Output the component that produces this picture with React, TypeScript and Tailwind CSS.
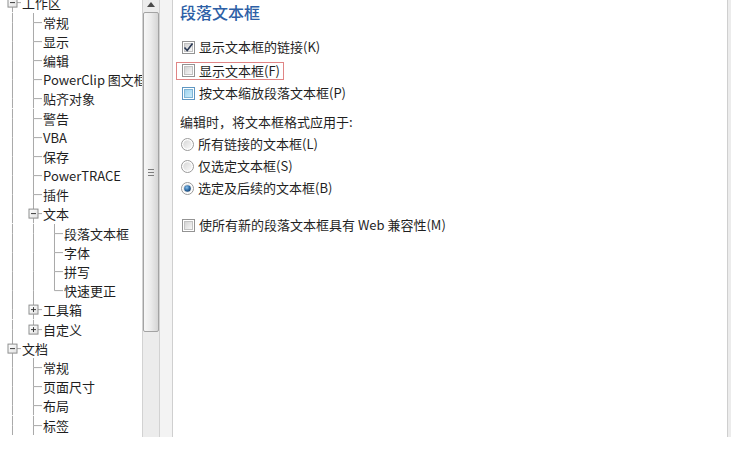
import React from 'react';

type CellP = { up?: boolean; down?: boolean; right?: boolean; box?: 'minus' | 'plus' };

const LINE = '#a9a9a9';

function Cell({ up, down, right, box }: CellP) {
  const mid = 9.6;
  return (
    <svg width="21" height="19.2" viewBox="0 0 21 19.2" className="block shrink-0">
      <defs>
        <linearGradient id="bxg" x1="0" y1="0" x2="1" y2="1">
          <stop offset="0" stopColor="#ffffff" />
          <stop offset="1" stopColor="#e2e2e2" />
        </linearGradient>
      </defs>
      {up && <line x1="12.5" y1="0" x2="12.5" y2={box ? mid - 4.5 : mid} stroke={LINE} strokeWidth="1" />}
      {down && <line x1="12.5" y1={box ? mid + 4.5 : mid} x2="12.5" y2="19.2" stroke={LINE} strokeWidth="1" />}
      {right && <line x1={box ? 16.5 : 12.5} y1={mid} x2="21" y2={mid} stroke={LINE} strokeWidth="1" />}
      {box && (
        <g>
          <rect x="8" y={mid - 4.5} width="9" height="9" fill="url(#bxg)" stroke="#8e8f8f" strokeWidth="1" />
          <line x1="10" y1={mid} x2="15" y2={mid} stroke="#3a3a3a" strokeWidth="1" />
          {box === 'plus' && <line x1="12.5" y1={mid - 2.5} x2="12.5" y2={mid + 2.5} stroke="#3a3a3a" strokeWidth="1" />}
        </g>
      )}
    </svg>
  );
}

type Row = { label: string; cells: CellP[] };

const P: CellP = { up: true, down: true };
const T: CellP = { up: true, down: true, right: true };
const L: CellP = { up: true, right: true };

const rows: Row[] = [
  { label: '工作区', cells: [{ box: 'minus', down: true, right: true }] },
  { label: '常规', cells: [P, T] },
  { label: '显示', cells: [P, T] },
  { label: '编辑', cells: [P, T] },
  { label: 'PowerClip 图文框', cells: [P, T] },
  { label: '贴齐对象', cells: [P, T] },
  { label: '警告', cells: [P, T] },
  { label: 'VBA', cells: [P, T] },
  { label: '保存', cells: [P, T] },
  { label: 'PowerTRACE', cells: [P, T] },
  { label: '插件', cells: [P, T] },
  { label: '文本', cells: [P, { box: 'minus', up: true, down: true, right: true }] },
  { label: '段落文本框', cells: [P, P, T] },
  { label: '字体', cells: [P, P, T] },
  { label: '拼写', cells: [P, P, T] },
  { label: '快速更正', cells: [P, P, L] },
  { label: '工具箱', cells: [P, { box: 'plus', up: true, down: true, right: true }] },
  { label: '自定义', cells: [P, { box: 'plus', up: true, right: true }] },
  { label: '文档', cells: [{ box: 'minus', up: true, down: true, right: true }] },
  { label: '常规', cells: [P, T] },
  { label: '页面尺寸', cells: [P, T] },
  { label: '布局', cells: [P, T] },
  { label: '标签', cells: [P, T] },
];

function Check({ checked, hover }: { checked?: boolean; hover?: boolean }) {
  return (
    <span
      className={`w-[13px] h-[13px] shrink-0 border flex items-center justify-center ${
        hover ? 'border-[#5f97c2] bg-[#ffffff]' : 'border-[#939393] bg-[#ffffff]'
      }`}
    >
      <span
        className={`w-[9px] h-[9px] flex items-center justify-center ${
          hover
            ? 'bg-gradient-to-br from-[#9fd3ee] to-[#c9ebfa] border border-[#7fb5d6]'
            : 'bg-gradient-to-br from-[#d3d3d3] to-[#f7f7f7] border border-[#c2c2c2]'
        }`}
      >
        {checked && (
          <svg width="11" height="11" viewBox="0 0 11 11" className="block shrink-0">
            <path d="M1.5 5.5 L4.2 8.5 L9.5 1.5" fill="none" stroke="#2b3a55" strokeWidth="1.6" />
          </svg>
        )}
      </span>
    </span>
  );
}

function Radio({ checked }: { checked?: boolean }) {
  return (
    <svg width="13" height="13" viewBox="0 0 13 13" className="block shrink-0">
      <defs>
        <linearGradient id="rg" x1="0" y1="0" x2="1" y2="1">
          <stop offset="0" stopColor="#d6d6d6" />
          <stop offset="1" stopColor="#fafafa" />
        </linearGradient>
        <radialGradient id="rd" cx="0.4" cy="0.35" r="0.7">
          <stop offset="0" stopColor="#8cc4ee" />
          <stop offset="0.6" stopColor="#2d6aa5" />
          <stop offset="1" stopColor="#173f6b" />
        </radialGradient>
      </defs>
      <circle cx="6.5" cy="6.5" r="6" fill="#ffffff" stroke="#9a9a9a" strokeWidth="1" />
      <circle cx="6.5" cy="6.5" r="4.3" fill="url(#rg)" />
      {checked && <circle cx="6.5" cy="6.5" r="3.3" fill="url(#rd)" />}
    </svg>
  );
}

const FONT = { fontFamily: '"Noto Sans CJK SC", "Noto Sans", sans-serif' };

export default function App() {
  return (
    <div className="w-[744px] h-[451px] bg-white overflow-hidden flex flex-col text-[#1f1f1f]" style={FONT}>
      <div className="h-[437px] flex shrink-0">
        {/* tree */}
        <div className="w-[142px] h-[437px] overflow-hidden shrink-0">
          <div className="-mt-[6.6px] flex flex-col">
            {rows.map((r, i) => (
              <div key={i} className="h-[19.2px] flex items-center whitespace-nowrap">
                {r.cells.map((c, j) => (
                  <Cell key={j} {...c} />
                ))}
                <span className="ml-[1px] text-[13px] leading-[19.2px]">{r.label}</span>
              </div>
            ))}
          </div>
        </div>
        {/* scrollbar */}
        <div className="w-[18px] h-[437px] shrink-0 flex flex-col bg-[#ececec] border-x border-[#d2d2d2]">
          <div className="h-[11px] flex items-start justify-center pt-[2px]">
            <svg width="8" height="5" viewBox="0 0 8 5" className="block">
              <path d="M0 5 L4 0 L8 5 Z" fill="#4a4a4a" />
            </svg>
          </div>
          <div className="mt-[1px] h-[320px] rounded-[2px] border border-[#a3a3a3] bg-gradient-to-r from-[#f7f7f7] via-[#ebebeb] to-[#d5d5d5] flex flex-col items-center justify-center gap-[2px]">
            <span className="w-[6px] h-[1px] bg-[#7d7d7d]" />
            <span className="w-[6px] h-[1px] bg-[#7d7d7d]" />
            <span className="w-[6px] h-[1px] bg-[#7d7d7d]" />
          </div>
          <div className="flex-1" />
        </div>
        <div className="w-[12px] h-[437px] shrink-0 bg-[#f3f3f3]" />
        {/* right panel */}
        <div className="w-[556px] h-[437px] shrink-0 bg-white border-x border-[#cfcfcf] flex flex-col pl-[7px]">
          <div className="h-[24px] flex items-center">
            <span className="text-[16px] font-medium text-[#2d5fa6] leading-none">段落文本框</span>
          </div>
          <div className="h-[12px]" />
          <div className="h-[22px] flex items-center gap-[4px] pl-[2px]">
            <Check checked />
            <span className="text-[13px]">显示文本框的链接(K)</span>
          </div>
          <div className="h-[25px] flex items-center">
            <div className="ml-[-4px] w-[108px] h-[18px] border border-[#e08585] flex items-center gap-[4px] pl-[5px]">
              <Check />
              <span className="text-[13px]">显示文本框(F)</span>
            </div>
          </div>
          <div className="h-[20px] flex items-center gap-[4px] pl-[2px]">
            <Check hover />
            <span className="text-[13px]">按文本缩放段落文本框(P)</span>
          </div>
          <div className="h-[7px]" />
          <div className="h-[23px] flex items-center">
            <span className="text-[13px]">编辑时，将文本框格式应用于:</span>
          </div>
          <div className="h-[22px] flex items-center gap-[4px] pl-[1px]">
            <Radio />
            <span className="text-[13px]">所有链接的文本框(L)</span>
          </div>
          <div className="h-[22px] flex items-center gap-[4px] pl-[1px]">
            <Radio />
            <span className="text-[13px]">仅选定文本框(S)</span>
          </div>
          <div className="h-[22px] flex items-center gap-[4px] pl-[1px]">
            <Radio checked />
            <span className="text-[13px]">选定及后续的文本框(B)</span>
          </div>
          <div className="h-[15px]" />
          <div className="h-[22px] flex items-center gap-[4px] pl-[2px]">
            <Check />
            <span className="text-[13px]">使所有新的段落文本框具有 Web 兼容性(M)</span>
          </div>
        </div>
        <div className="w-[3px] h-[437px] shrink-0 bg-[#ececec]" />
      </div>
    </div>
  );
}
